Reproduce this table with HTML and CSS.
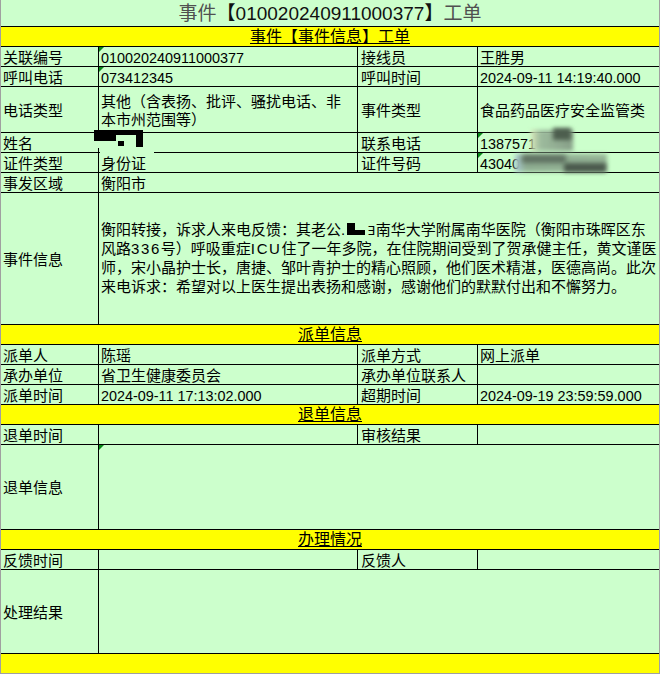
FILE: index.html
```html
<!DOCTYPE html>
<html lang="zh-CN">
<head>
<meta charset="utf-8">
<title>事件工单</title>
<link rel="stylesheet" href="styles.css">
</head>
<body>
<div class="sheet">
  <div class="row title"><span class="t-dim">事件</span><span class="t-main">【010020240911000377】</span><span class="t-dim">工单</span></div>
  <div class="row band"><span class="band-text">事件【事件信息】工单</span></div>

  <div class="row quad">
    <div class="cell">关联编号</div>
    <div class="cell num mark">010020240911000377</div>
    <div class="cell lab3">接线员</div>
    <div class="cell">王胜男</div>
  </div>
  <div class="row quad">
    <div class="cell">呼叫电话</div>
    <div class="cell num mark">073412345</div>
    <div class="cell lab3">呼叫时间</div>
    <div class="cell num">2024-09-11 14:19:40.000</div>
  </div>
  <div class="row quad tall">
    <div class="cell">电话类型</div>
    <div class="cell"><div>其他（含表扬、批评、骚扰电话、非<br>本市州范围等）</div></div>
    <div class="cell lab3">事件类型</div>
    <div class="cell">食品药品医疗安全监管类</div>
  </div>
  <div class="row quad">
    <div class="cell">姓名</div>
    <div class="cell"></div>
    <div class="cell lab3">联系电话</div>
    <div class="cell num mark">1387571</div>
  </div>
  <div class="row quad">
    <div class="cell">证件类型</div>
    <div class="cell">身份证</div>
    <div class="cell lab3">证件号码</div>
    <div class="cell num mark">43040</div>
  </div>
  <div class="row pair">
    <div class="cell">事发区域</div>
    <div class="cell">衡阳市</div>
  </div>
  <div class="row pair info">
    <div class="cell">事件信息</div>
    <div class="cell para"><div>衡阳转接，诉求人来电反馈：其老公.<svg class="inl-redact" width="19" height="13" viewBox="0 0 19 13"><rect x="1" y="0" width="8" height="12" fill="#000"/><rect x="8" y="7" width="11" height="5" fill="#000"/></svg><span class="exist">∃</span>南华大学附属南华医院（衡阳市珠晖区东<br>风路<span class="lat">336</span>号）呼吸重症<span class="lat">ICU</span>住了一年多院，在住院期间受到了贺承健主任，黄文谨医<br>师，宋小晶护士长，唐捷、邹叶青护士的精心照顾，他们医术精湛，医德高尚。此次<br>来电诉求：希望对以上医生提出表扬和感谢，感谢他们的默默付出和不懈努力。</div></div>
  </div>

  <div class="row band"><span class="band-text">派单信息</span></div>
  <div class="row quad">
    <div class="cell">派单人</div>
    <div class="cell">陈瑶</div>
    <div class="cell lab3">派单方式</div>
    <div class="cell">网上派单</div>
  </div>
  <div class="row quad">
    <div class="cell">承办单位</div>
    <div class="cell">省卫生健康委员会</div>
    <div class="cell lab3">承办单位联系人</div>
    <div class="cell"></div>
  </div>
  <div class="row quad">
    <div class="cell">派单时间</div>
    <div class="cell num">2024-09-11 17:13:02.000</div>
    <div class="cell lab3">超期时间</div>
    <div class="cell num">2024-09-19 23:59:59.000</div>
  </div>

  <div class="row band"><span class="band-text">退单信息</span></div>
  <div class="row quad">
    <div class="cell">退单时间</div>
    <div class="cell"></div>
    <div class="cell lab3">审核结果</div>
    <div class="cell"></div>
  </div>
  <div class="row pair back">
    <div class="cell">退单信息</div>
    <div class="cell mark"></div>
  </div>

  <div class="row band"><span class="band-text">办理情况</span></div>
  <div class="row quad">
    <div class="cell">反馈时间</div>
    <div class="cell"></div>
    <div class="cell lab3">反馈人</div>
    <div class="cell"></div>
  </div>
  <div class="row pair result">
    <div class="cell">处理结果</div>
    <div class="cell"></div>
  </div>
  <div class="row band last"></div>

  <svg class="name-redact" width="62" height="26" viewBox="0 0 62 26">
    <rect x="7" y="24" width="54" height="1" fill="#ccffcc"/>
    <rect x="5" y="13" width="2" height="7" fill="#ccffcc"/>
    <rect x="1" y="2" width="22" height="11" fill="#000"/>
    <rect x="1" y="2" width="49" height="5" fill="#000"/>
    <rect x="25" y="13" width="6" height="5" fill="#000"/>
    <rect x="43" y="2" width="7" height="17" fill="#000"/>
  </svg>
  <div class="blur phone-a"></div>
  <div class="blur phone-b"></div>
  <div class="blur id-a"></div>
  <div class="blur id-b"></div>
  <div class="blur id-c"></div>
</div>
</body>
</html>
```
FILE: styles.css
```css
* {
  box-sizing: border-box;
}

body {
  margin: 0;
  font-family: "Liberation Sans", "Noto Sans CJK SC", sans-serif;
  color: #000;
}

.sheet {
  position: relative;
  width: 660px;
  height: 674px;
  background: #ccffcc;
  border: 1px solid #a0a0a0;
  border-top: none;
}

.row {
  display: grid;
  grid-template-columns: 97px 259px 120px 182px;
  height: 20px;
  border-bottom: 1px solid #000;
}

.row.pair {
  grid-template-columns: 97px 1fr;
}

.row.tall {
  height: 46px;
}

.row.info {
  height: 132px;
}

.row.back {
  height: 85px;
}

.row.result {
  height: 84px;
}

.row.title {
  display: flex;
  justify-content: center;
  align-items: center;
  height: 27px;
  font-size: 19px;
  line-height: 22px;
  padding-top: 2px;
}

.t-dim {
  color: #505050;
}

.t-main {
  color: #111;
}

.row.band {
  display: flex;
  justify-content: center;
  align-items: center;
  background: #ffff00;
  font-size: 16px;
  line-height: 18px;
  padding-top: 1px;
}

.row.band.last {
  border-bottom: none;
  height: 19px;
}

.band-text {
  text-decoration: underline;
  text-underline-offset: 1px;
}

.cell {
  position: relative;
  display: flex;
  align-items: center;
  padding: 2px 0 0 2px;
  font-size: 15px;
  line-height: 18px;
  white-space: nowrap;
}

.cell + .cell {
  border-left: 1px solid #000;
}

.cell.lab3 {
  padding-left: 3px;
}

.cell.num {
  font-size: 14.4px;
}

.cell.mark::before {
  content: "";
  position: absolute;
  left: 0;
  top: 0;
  border-top: 5px solid #0a8a1a;
  border-right: 5px solid transparent;
}

.cell.para {
  padding-top: 0;
  line-height: 18.7px;
}

.lat {
  letter-spacing: 1.6px;
}

.inl-redact {
  vertical-align: -1px;
  margin-left: 1px;
}

.exist {
  font-family: "DejaVu Sans", sans-serif;
  font-size: 12px;
  margin: 0 1px 0 2px;
}

.name-redact {
  position: absolute;
  left: 92px;
  top: 128px;
}

.blur {
  position: absolute;
}

.phone-a {
  left: 530px;
  top: 130px;
  width: 42px;
  height: 21px;
  background: linear-gradient(to right, #d8e6b8 0%, #9dbb9d 22%, #879f88 100%);
  filter: blur(2px);
}

.phone-b {
  left: 552px;
  top: 128px;
  width: 18px;
  height: 12px;
  background: #4d5e4e;
  filter: blur(2px);
}

.id-a {
  left: 514px;
  top: 154px;
  width: 92px;
  height: 18px;
  background: linear-gradient(to right, #a9c6d4 0%, #8fae92 12%, #94b495 100%);
  filter: blur(2px);
}

.id-b {
  left: 521px;
  top: 155px;
  width: 44px;
  height: 8px;
  background: #5e6f60;
  filter: blur(2.5px);
}

.id-c {
  left: 563px;
  top: 163px;
  width: 42px;
  height: 9px;
  background: #4b5a4d;
  filter: blur(2px);
}
```
